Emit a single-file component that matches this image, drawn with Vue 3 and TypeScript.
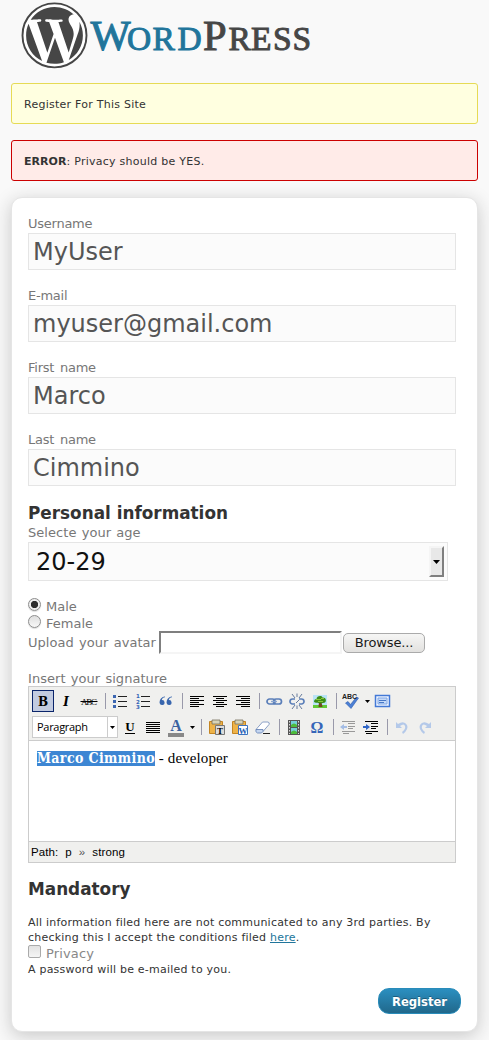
<script setup lang="ts">
import { ref } from 'vue'

interface Field {
  id: string
  label: string
  value: string
}

const fields = ref<Field[]>([
  { id: 'username', label: 'Username', value: 'MyUser' },
  { id: 'email', label: 'E-mail', value: 'myuser@gmail.com' },
  { id: 'first', label: 'First name', value: 'Marco' },
  { id: 'last', label: 'Last name', value: 'Cimmino' },
])

const gender = ref<string>('Male')
const genders: string[] = ['Male', 'Female']

type Tool = string
const rowOne: Tool[] = [
  'bold', 'italic', 'strike', 'sep', 'ul', 'ol', 'quote', 'sep', 'left', 'center', 'right', 'sep',
  'link', 'unlink', 'image', 'sep', 'spell', 'arrow', 'full',
]
const rowTwo: Tool[] = [
  'underline', 'justify', 'color', 'arrow', 'wide', 'pasteText', 'pasteWord', 'eraser', 'sep',
  'film', 'omega', 'sep', 'outdent', 'indent', 'sep', 'undo', 'redo',
]
const rows: Tool[][] = [rowOne, rowTwo]
</script>

<template>
  <div class="page">
    <header class="logo">
      <svg width="330" height="80" viewBox="0 0 330 80">
        <circle cx="54.5" cy="35.4" r="32" fill="#fff" stroke="#464646" stroke-width="1.9" />
        <path
          transform="translate(22.9 3.8) scale(2.633)"
          fill="#464646"
          d="M21.469 6.825c.84 1.537 1.318 3.3 1.318 5.175 0 3.979-2.156 7.456-5.363 9.325l3.295-9.527c.615-1.54.82-2.771.82-3.864 0-.405-.026-.78-.07-1.11m-7.981.105c.647-.03 1.232-.105 1.232-.105.582-.075.514-.93-.067-.899 0 0-1.755.135-2.88.135-1.064 0-2.85-.15-2.85-.15-.585-.03-.661.855-.075.885 0 0 .54.061 1.125.09l1.68 4.605-2.37 7.08L5.354 6.9c.649-.03 1.234-.1 1.234-.1.585-.075.516-.93-.065-.896 0 0-1.746.138-2.874.138-.2 0-.438-.008-.69-.015C4.911 3.15 8.235 1.215 12 1.215c2.809 0 5.365 1.072 7.286 2.833-.046-.003-.091-.009-.141-.009-1.06 0-1.812.923-1.812 1.914 0 .89.513 1.643 1.06 2.531.411.72.89 1.643.89 2.977 0 .915-.354 1.994-.821 3.479l-1.075 3.585-3.9-11.61.001.014zM12 22.784c-1.059 0-2.081-.153-3.048-.437l3.237-9.406 3.315 9.087c.024.053.05.101.078.149-1.12.393-2.325.609-3.582.609M1.211 12c0-1.564.336-3.05.935-4.39L7.29 21.709C3.694 19.96 1.212 16.271 1.211 12"
        />
        <g class="wordmark">
          <text class="blue" y="50"><tspan class="big" x="90.5">W</tspan><tspan class="small" x="127 152.500 177.500">ORD</tspan></text>
          <text class="dark" y="50"><tspan class="big" x="203">P</tspan><tspan class="small" x="228.500 251 273 292.500">RESS</tspan></text>
        </g>
      </svg>
    </header>

    <p class="notice message">Register For This Site</p>
    <p class="notice error"><strong>ERROR</strong>: Privacy should be YES.</p>

    <form class="card" @submit.prevent>
      <div v-for="f in fields" :key="f.id" class="field">
        <label :for="f.id">{{ f.label }}</label>
        <input :id="f.id" v-model="f.value" type="text" spellcheck="false" />
      </div>

      <h3>Personal information</h3>
      <div class="label age-label">Selecte your age</div>
      <div class="select">
        <span>20-29</span>
        <i class="stepper"><svg width="7" height="4"><path d="M0 0h7L3.5 4z" fill="#000" /></svg></i>
      </div>

      <div class="genders">
        <div v-for="g in genders" :key="g" class="gender" @click="gender = g">
          <i class="radio" :class="{ on: gender === g }"></i>
          <span>{{ g }}</span>
        </div>
      </div>

      <div class="upload">
        <span class="label">Upload your avatar</span>
        <span class="file"></span>
        <button type="button" class="browse">Browse...</button>
      </div>

      <div class="label signature">Insert your signature</div>
      <div class="editor">
        <div class="toolbar">
          <div v-for="(row, r) in rows" :key="r" class="row">
            <div v-if="r === 1" class="format">
              <span>Paragraph</span>
              <i><svg width="5" height="3"><path d="M0 0h5L2.5 3z" /></svg></i>
            </div>
            <div v-for="(t, k) in row" :key="k" class="tool" :class="t">
              <svg v-if="t !== 'sep' && t !== 'wide' && t !== 'arrow'" width="20" height="20" viewBox="0 0 20 20">
                <text v-if="t === 'bold'" class="glyph b" x="10" y="14.5">B</text>
                <text v-else-if="t === 'italic'" class="glyph b i" x="10" y="14.5">I</text>
                <g v-else-if="t === 'strike'">
                  <text class="glyph abc" x="2" y="13.5" textLength="16">ABC</text>
                  <path d="M1.500 10.500h17" stroke="#000" />
                </g>
                <g v-else-if="t === 'ul' || t === 'ol'">
                  <path d="M8 5.500h9M8 10.500h9M8 15.500h9" stroke="#222" />
                  <path v-if="t === 'ul'" d="M3 4h3v3h-3zM3 9h3v3h-3zM3 14h3v3h-3z" fill="#3c66b1" />
                  <g v-else class="nums"><text x="3" y="7">1</text><text x="3" y="12.500">2</text><text x="3" y="18">3</text></g>
                </g>
                <path v-else-if="t === 'quote'" d="M9 5.500C5 6 3.500 9 3.600 12a2.500 2.500 0 1 0 2.200-2.900C6 7.600 7 6.600 9 6.300zM16 5.500c-4 .5-5.500 3.500-5.400 6.500a2.500 2.500 0 1 0 2.200-2.900c.2-1.500 1.200-2.500 3.200-2.800z" fill="#3866ae" />
                <path v-else-if="t === 'left'" d="M3 5.500h14M3 7.500h9M3 9.500h14M3 11.500h9M3 13.500h14M3 15.500h9" class="lines" />
                <path v-else-if="t === 'center'" d="M3 5.500h14M6 7.500h8M3 9.500h14M6 11.500h8M3 13.500h14M6 15.500h8" class="lines" />
                <path v-else-if="t === 'right'" d="M3 5.500h14M8 7.500h9M3 9.500h14M8 11.500h9M3 13.500h14M8 15.500h9" class="lines" />
                <path v-else-if="t === 'justify'" d="M3 5.500h14M3 7.500h14M3 9.500h14M3 11.500h14M3 13.500h14M3 15.500h14" class="lines" />
                <g v-else-if="t === 'link'" fill="none" stroke="#5b7fb9" stroke-width="1.700">
                  <rect x="3" y="8" width="8" height="5" rx="2.500" /><rect x="9.500" y="8" width="8" height="5" rx="2.500" />
                  <path d="M7 10.500h6" stroke="#8ba6d0" stroke-width="1.300" />
                </g>
                <g v-else-if="t === 'unlink'" fill="none" stroke="#5b7fb9" stroke-width="1.700">
                  <path d="M8 8H5.500a2.500 2.500 0 0 0 0 5H8M12 8h2.500a2.500 2.500 0 0 1 0 5H12" />
                  <path d="M5 3l3 4M10 2.500V6M15 3l-3 4M5 18l3-4M10 18v-3.500M15 18l-3-4M9 12l3-3" stroke="#667a9c" stroke-width="1" />
                </g>
                <g v-else-if="t === 'image'">
                  <path d="M3 4h14v13h-14z" fill="#b9e3f6" /><path d="M3 14h14v3h-14z" fill="#63c936" />
                  <path d="M9 11h2.500l1 5h-4z" fill="#704a20" />
                  <path d="M4 11c0-2 1-3 2.500-3 0-3 5-4 6-1.500 3-.5 4.500 3 2.500 5-2 1-9 1-11-.5z" fill="#3b8d17" />
                  <path d="M6 8.500h5M11 7.500h3M8 10.500h5" stroke="#8ac83a" />
                </g>
                <g v-else-if="t === 'spell'">
                  <path d="M4.500 12l2.500-1.500 2.500 3 6-7.500 2 1-7.500 10.500z" fill="#4c80d5" stroke="#2c5bab" stroke-width=".6" />
                  <text class="tiny" x="1" y="7.500" textLength="15">ABC</text>
                </g>
                <g v-else-if="t === 'full'">
                  <path d="M2.500 4.500h14v11h-14z" fill="#eef4ff" stroke="#4379d6" stroke-width="1.500" />
                  <path d="M5 7h9v6H5z" fill="#c6daf8" stroke="#7ea6e5" /><path d="M6 9.500h7M6 11.500h5" stroke="#4878c6" />
                </g>
                <g v-else-if="t === 'underline'">
                  <text class="glyph under" x="10" y="14">U</text><path d="M5 16.500h10" stroke="#000" />
                </g>
                <g v-else-if="t === 'color'">
                  <text class="glyph acol" x="10" y="14">A</text><path d="M2 16h16v4h-16z" fill="#888" />
                </g>
                <g v-else-if="t === 'pasteText' || t === 'pasteWord'">
                  <path d="M2.500 4.500h13v12h-13z" fill="#eeb348" stroke="#c48522" /><path d="M5 3h8v4H5z" fill="#d8d4b8" stroke="#77705c" stroke-width=".8" />
                  <path d="M8.500 8.500h9v9h-9z" :fill="t === 'pasteText' ? '#ddd' : '#fff'" :stroke="t === 'pasteText' ? '#777' : '#3c73c0'" />
                  <text class="mini" :class="t" x="13" y="16.500">{{ t === 'pasteText' ? 'T' : 'W' }}</text>
                </g>
                <g v-else-if="t === 'eraser'" stroke-linejoin="round">
                  <path d="M3 12.500l6.500-7.500h5.500q2 .5 1 2.500l-6 7z" fill="#fff" stroke="#8ba0c6" />
                  <path d="M3 12.500l7 0 0 2-1.500 1.500H4.500q-2.500-1-1.500-3.500z" fill="#c4d5ef" stroke="#5f7db2" stroke-width=".8" /><path d="M10 16.500h7" stroke="#222" />
                </g>
                <g v-else-if="t === 'film'">
                  <path d="M4 3h12v15h-12z" fill="#555" /><path d="M7 4h6v6H7zM7 11h6v6H7z" fill="#74d0dc" />
                  <path d="M7 8q3-3 6 0v2H7zM7 15q3-3 6 0v2H7z" fill="#4dbb3c" />
                  <path d="M5.500 4v13M14.500 4v13" stroke="#ddd" stroke-dasharray="1.500 1.500" />
                </g>
                <text v-else-if="t === 'omega'" class="glyph omega" x="10" y="16">Ω</text>
                <g v-else-if="t === 'outdent' || t === 'indent'">
                  <path d="M4 4.500h13M10 6.500h7M10 9.500h7M10 11.500h5M4 14.500h13M5 16.500h6" :stroke="t === 'indent' ? '#000' : '#999'" />
                  <path v-if="t === 'indent'" d="M2 9h3V7l4 3-4 3v-2H2z" fill="#2f65c6" />
                  <path v-else d="M9 9H6V7l-4 3 4 3v-2h3z" fill="#a4bde5" />
                </g>
                <path v-else d="M4 5v6h6L8 9q4-3 5 0t-3 6l1 2q6-5 4-9-3-5-9-1z" class="bend" />
              </svg>
              <svg v-else-if="t === 'arrow'" width="5" height="3"><path d="M0 0h5L2.5 3z" /></svg>
            </div>
          </div>
        </div>
        <div class="content"><strong>Marco Cimmino</strong><span> - developer</span></div>
        <div class="status"><span>Path:</span><span>p</span><span class="raquo">»</span><span>strong</span></div>
      </div>

      <h3 class="mandatory">Mandatory</h3>
      <p class="small-text">All information filed here are not communicated to any 3rd parties. By<br />checking this I accept the conditions filed <a href="#">here</a>.</p>
      <div class="privacy"><i class="check"></i><span>Privacy</span></div>
      <p class="small-text">A password will be e-mailed to you.</p>
      <div class="actions"><button type="submit" class="submit">Register</button></div>
    </form>
  </div>
</template>

<style>
html, body { margin: 0; background: #f9f9f9; }
</style>

<style scoped>
.page {
  box-sizing: border-box;
  width: 489px;
  height: 1040px;
  padding: 0 11px;
  overflow: hidden;
  background: #f9f9f9;
  color: #333;
  font-family: "DejaVu Sans", Verdana, sans-serif;
  font-size: 13px;
}
.page * { box-sizing: border-box; }
.logo { height: 83px; margin-left: -11px; }
.logo svg { display: block; }
.wordmark { font-family: "Liberation Serif", serif; }
.big { font-size: 42.5px; }
.small { font-size: 33.5px; }
.blue { fill: #21759b; stroke: #21759b; stroke-width: 1; }
.dark { fill: #464646; stroke: #464646; stroke-width: 1; }
.notice {
  height: 41px;
  margin: 0 0 16px;
  padding: 0 12px;
  border: 1px solid;
  border-radius: 3px;
  font-size: 11px;
  line-height: 41px;
  letter-spacing: .25px;
}
.notice strong { letter-spacing: .05px; }
.message { background: #ffffe0; border-color: #e6db55; }
.error { background: #ffebe8; border-color: #c00; }
.card {
  width: 467px;
  height: 835px;
  padding: 18px 16px 0;
  border: 1px solid #e5e5e5;
  border-radius: 11px;
  background: #fff;
  box-shadow: 0 4px 18px rgba(200, 200, 200, 1);
}
.field { display: flex; flex-direction: column; height: 72px; }
.field label { height: 17px; line-height: 16px; color: #777; letter-spacing: -.25px; word-spacing: 2px; }
.field input {
  width: 428px;
  height: 37px;
  padding: 1px 4px 0;
  border: 1px solid #e5e5e5;
  background: #fbfbfb;
  color: #555;
  font: 24px "DejaVu Sans", sans-serif;
  outline: 0;
}
.label { color: #777; letter-spacing: .05px; word-spacing: 1px; }
h3 { height: 19px; margin: 0; font-size: 16.85px; line-height: 19px; color: #333; }
.age-label { height: 19px; line-height: 19px; }
.select {
  display: flex;
  justify-content: space-between;
  align-items: center;
  width: 420px;
  height: 39px;
  padding: 0 3px 0 7px;
  border: 1px solid #e5e5e5;
  background: #fbfbfb;
  color: #111;
  font-size: 24px;
}
.stepper {
  display: flex;
  align-items: center;
  justify-content: center;
  width: 15px;
  height: 31px;
  border: 2px solid;
  border-color: #f5f5f5 #7f7f7f #7f7f7f #f5f5f5;
  background: #e8e8e8;
}
.genders { padding-top: 16px; height: 50px; }
.gender { display: flex; height: 17px; line-height: 20px; gap: 5px; color: #777; }
.radio {
  width: 13px;
  height: 13px;
  margin-top: 1px;
  border: 1px solid #8d8d8d;
  border-radius: 50%;
  background: linear-gradient(#dedede, #f8f8f8);
  box-shadow: 0 1px 1px #ddd;
}
.radio.on { background: radial-gradient(circle, #2d2d2d 0 3.3px, #eee 4px); }
.upload { display: flex; align-items: center; height: 23px; }
.upload .label { width: 131px; }
.file { width: 183px; height: 23px; border: 2px solid; border-color: #7f7f7f #f5f5f5 #f5f5f5 #7f7f7f; }
.browse {
  width: 82px;
  height: 20px;
  margin-left: 1px;
  padding: 0;
  border: 1px solid #aaa;
  border-radius: 5px;
  background: linear-gradient(#f6f6f5, #e2e1df);
  color: #1a1a1a;
  font: 13px/17px "DejaVu Sans", sans-serif;
  letter-spacing: -.15px;
}
.signature { height: 32px; padding-top: 16px; line-height: 17px; }
.editor { width: 428px; height: 177px; border: 1px solid #ccc; background: #fff; }
.toolbar { height: 54px; padding: 3px; background: #f0f0ee; border-bottom: 1px solid #ccc; }
.row { display: flex; gap: 1px; height: 26px; }
.tool { display: flex; align-items: center; justify-content: center; width: 22px; height: 22px; }
.tool.bold { background: #c2cbe0; border: 1px solid #0a246a; }
.tool.sep, .tool.wide { width: 7px; }
.tool.wide { width: 8px; }
.tool.sep::before, .tool.wide::before { content: ""; width: 1px; height: 16px; background: #99a; margin-left: 1px; }
.tool.arrow { width: 8px; }
.tool svg { display: block; flex: none; }
.format { display: flex; width: 86px; height: 22px; border: 1px solid #ccc; background: #fff; color: #000; font: 11px/20px "Open Sans", sans-serif; letter-spacing: -.3px; }
.format span { flex: 1; padding-left: 4px; }
.format i { display: flex; align-items: center; justify-content: center; width: 10px; border-left: 1px solid #ccc; }
.glyph { font-family: "DejaVu Serif", serif; font-size: 13px; text-anchor: middle; }
.glyph.b { font-weight: bold; font-size: 12px; }
.glyph.i { font-style: italic; }
.glyph.abc { font: 9px "Liberation Serif", serif; text-anchor: start; }
.glyph.under { font: bold 13px "Liberation Serif", serif; }
.glyph.acol { font: bold 16px "Liberation Serif", serif; fill: #3b62a0; }
.glyph.omega { font: bold 16px "Liberation Serif", serif; fill: #3565b8; }
.nums { font: bold 5.5px "DejaVu Sans", sans-serif; fill: #3565b8; }
.tiny { font: bold 7px "Liberation Sans", sans-serif; fill: #222; }
.mini { font: bold 9px "Liberation Serif", serif; text-anchor: middle; }
.mini.pasteWord { fill: #2862b5; }
.lines { stroke: #000; }
.bend { fill: #b4c9e9; }
.redo svg { transform: scaleX(-1); }
.content { height: 100px; padding: 10px 8px; color: #000; font: 15px/15px "Liberation Serif", serif; letter-spacing: .1px; white-space: pre; }
.content strong { display: inline-block; width: 118px; height: 15px; background: #3d86d3; color: #fff; font: bold 14px/14px "DejaVu Serif Condensed", "DejaVu Serif", serif; letter-spacing: .38px; }
.status { display: flex; height: 21px; padding-left: 2px; border-top: 1px solid #ccc; background: #f0f0ee; color: #000; font: 11.5px/21px "Liberation Sans", sans-serif; gap: 7px; letter-spacing: .1px; }
.raquo { color: #555; }
.mandatory { margin-top: 17px; }
.small-text { margin: 0; font-size: 11px; line-height: 15px; letter-spacing: .22px; white-space: nowrap; }
.mandatory + .small-text { margin-top: 16px; }
.small-text a { color: #21759b; }
.privacy { display: flex; gap: 5px; height: 17px; line-height: 18px; color: #888; letter-spacing: .15px; }
.check { width: 13px; height: 13px; border: 1px solid #aaa; border-radius: 2px; background: linear-gradient(#e2e2e2, #f5f5f5); }
.actions { display: flex; justify-content: flex-end; padding-top: 11px; }
.submit {
  width: 83px;
  height: 26px;
  padding: 1px 0 0;
  border: 1px solid #298cba;
  border-radius: 11px;
  background: linear-gradient(#2b8fc0, #21688b);
  color: #fff;
  font: bold 11.6px "DejaVu Sans", sans-serif;
  text-shadow: 0 -1px 0 rgba(0, 0, 0, .3);
}
</style>
